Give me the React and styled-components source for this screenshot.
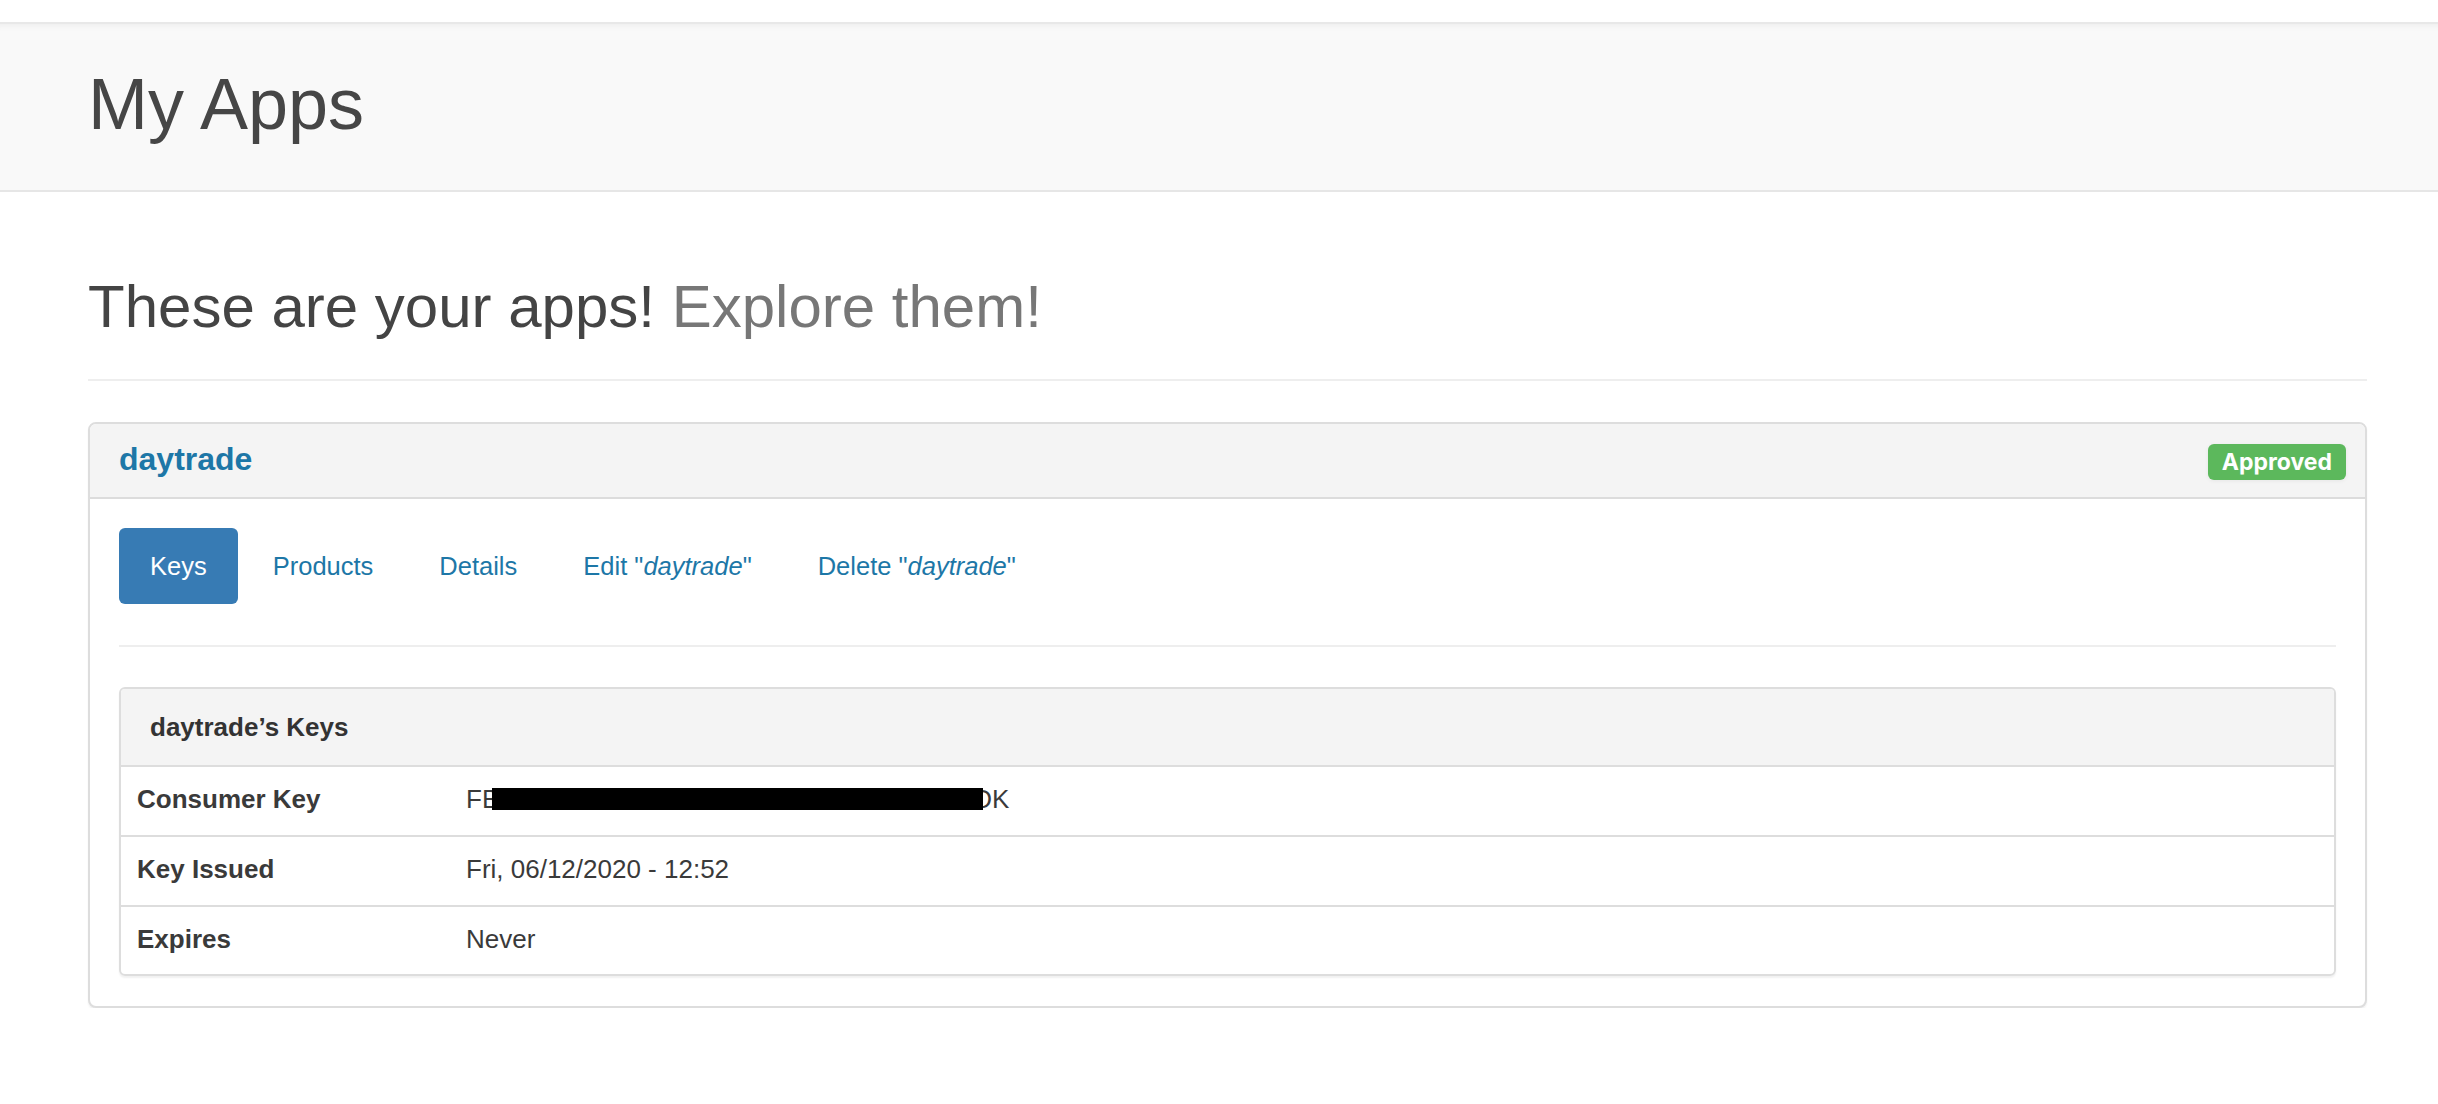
import styled, { createGlobalStyle } from "styled-components";

const GlobalStyle = createGlobalStyle`
  html, body {
    margin: 0;
    padding: 0;
    background: #fff;
  }
  body {
    font-family: "Liberation Sans", Arial, Helvetica, sans-serif;
    color: #333;
  }
`;

const Page = styled.div`
  padding-top: 22px;
`;

const PageHeader = styled.header`
  background: #f9f9f9;
  border-top: 2px solid #e8e8e8;
  border-bottom: 2px solid #e6e6e6;
  box-shadow: inset 0 8px 8px -8px rgba(0, 0, 0, 0.07);
  padding: 41px 71px 46px 88px;
`;

const Title = styled.h1`
  margin: 0;
  font-size: 72px;
  line-height: 79px;
  font-weight: 400;
  color: #464646;
`;

const Main = styled.main`
  padding: 0 71px 0 88px;
`;

const Lead = styled.h2`
  margin: 81px 0 0;
  font-size: 60px;
  line-height: 67px;
  font-weight: 400;
  color: #444;
`;

const Muted = styled.span`
  color: #777;
`;

const Rule = styled.hr`
  margin: ${(p) => p.$top || 40}px 0 0;
  border: 0;
  border-top: 2px solid #eee;
  height: 0;
`;

const Card = styled.section`
  margin-top: 41px;
  border: 2px solid #ddd;
  border-radius: 8px;
  background: #fff;
  box-shadow: 0 2px 2px rgba(0, 0, 0, 0.06);
  overflow: hidden;
`;

const CardHeader = styled.div`
  display: flex;
  align-items: center;
  justify-content: space-between;
  height: 73px;
  padding: 0 19px 0 29px;
  background: #f4f4f4;
  border-bottom: 2px solid #dcdcdc;
`;

const AppName = styled.a`
  margin-bottom: 4px;
  font-size: 32px;
  line-height: 36px;
  font-weight: 700;
  color: #1d77a7;
  text-decoration: none;
`;

const Badge = styled.span`
  display: inline-flex;
  align-items: center;
  height: 36px;
  margin-top: 2px;
  padding: 0 14px;
  border-radius: 6px;
  background: #5cb85c;
  color: #fff;
  font-family: Inter, "Liberation Sans", sans-serif;
  font-weight: 700;
  font-size: 23px;
  box-shadow: 0 1px 4px rgba(0, 0, 0, 0.06);
`;

const CardBody = styled.div`
  padding: 29px 29px 30px;
`;

const Nav = styled.nav`
  display: flex;
  gap: 4px;
`;

const NavLink = styled.a`
  display: flex;
  align-items: center;
  height: 76px;
  padding: 0 31px;
  border-radius: 6px;
  font-size: 25.5px;
  text-decoration: none;
  color: ${(p) => (p.$active ? "#fff" : "#1d77a7")};
  background: ${(p) => (p.$active ? "#377bb4" : "transparent")};
  white-space: pre;
`;

const Panel = styled.div`
  margin-top: 40px;
  border: 2px solid #ddd;
  border-radius: 6px;
  box-shadow: 0 2px 2px rgba(0, 0, 0, 0.06);
  overflow: hidden;
`;

const PanelHeading = styled.div`
  display: flex;
  align-items: center;
  height: 76px;
  padding: 0 29px;
  background: #f4f4f4;
  border-bottom: 2px solid #ddd;
  font-size: 26px;
  font-weight: 700;
  color: #333;
`;

const Row = styled.div`
  display: grid;
  grid-template-columns: 329px 1fr;
  height: ${(p) => p.$h || 68}px;
  border-top: ${(p) => (p.$first ? "0" : "2px solid #ddd")};
`;

const Cell = styled.div`
  display: flex;
  align-items: center;
  padding: 0 16px 3px;
  font-size: 26px;
  font-weight: ${(p) => (p.$label ? 700 : 400)};
  color: #3a3a3a;
  white-space: pre;
`;

const Redacted = styled.span`
  position: relative;
  z-index: 1;
  display: inline-block;
  width: 491px;
  height: 22px;
  margin: 0 -10px 0 -7px;
  vertical-align: -2px;
  background: #000;
`;

const links = ["Products", "Details"];

export default function App() {
  return (
    <Page>
      <GlobalStyle />
      <PageHeader>
        <Title>My Apps</Title>
      </PageHeader>
      <Main>
        <Lead>
          These are your apps! <Muted>Explore them!</Muted>
        </Lead>
        <Rule $top={39} />
        <Card>
          <CardHeader>
            <AppName href="#">daytrade</AppName>
            <Badge>Approved</Badge>
          </CardHeader>
          <CardBody>
            <Nav>
              <NavLink $active href="#">
                Keys
              </NavLink>
              {links.map((l) => (
                <NavLink key={l} href="#">
                  {l}
                </NavLink>
              ))}
              <NavLink href="#">
                Edit "<em>daytrade</em>"
              </NavLink>
              <NavLink href="#">
                Delete "<em>daytrade</em>"
              </NavLink>
            </Nav>
            <Rule $top={41} />
            <Panel>
              <PanelHeading>daytrade’s Keys</PanelHeading>
              <Row $first>
                <Cell $label>Consumer Key</Cell>
                <Cell>
                  <span>
                    FB
                    <Redacted />
                    DK
                  </span>
                </Cell>
              </Row>
              <Row>
                <Cell $label>Key Issued</Cell>
                <Cell>Fri, 06/12/2020 - 12:52</Cell>
              </Row>
              <Row $h={67}>
                <Cell $label>Expires</Cell>
                <Cell>Never</Cell>
              </Row>
            </Panel>
          </CardBody>
        </Card>
      </Main>
    </Page>
  );
}
